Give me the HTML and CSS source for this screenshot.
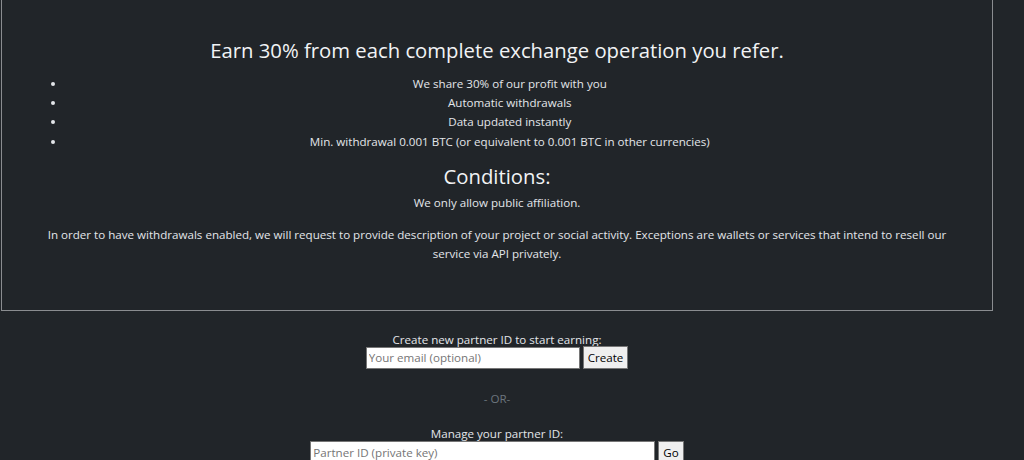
FILE: index.html
```html
<!DOCTYPE html>
<html lang="en">
<head>
<meta charset="utf-8">
<title>Affiliate</title>
<link rel="stylesheet" href="styles.css">
</head>
<body>
<main class="page">
  <section class="info-box">
    <h3 class="title">Earn 30% from each complete exchange operation you refer.</h3>
    <ul class="perks">
      <li>We share 30% of our profit with you</li>
      <li>Automatic withdrawals</li>
      <li>Data updated instantly</li>
      <li>Min. withdrawal 0.001 BTC (or equivalent to 0.001 BTC in other currencies)</li>
    </ul>
    <h3 class="subtitle">Conditions:</h3>
    <p class="text">We only allow public affiliation.</p>
    <p class="text">In order to have withdrawals enabled, we will request to provide description of your project or social activity. Exceptions are wallets or services that intend to resell our service via API privately.</p>
  </section>

  <form class="partner-form create-form">
    <label class="form-label" for="email">Create new partner ID to start earning:</label>
    <div class="form-row">
      <input id="email" class="field field-short" type="text" placeholder="Your email (optional)">
      <button class="btn" type="button">Create</button>
    </div>
  </form>

  <div class="or">- OR-</div>

  <form class="partner-form manage-form">
    <label class="form-label" for="pid">Manage your partner ID:</label>
    <div class="form-row">
      <input id="pid" class="field field-long" type="text" placeholder="Partner ID (private key)">
      <button class="btn" type="button">Go</button>
    </div>
  </form>
</main>
</body>
</html>
```

FILE: styles.css
```css
* { box-sizing: border-box; }

html, body {
  margin: 0;
  padding: 0;
  background: #212529;
}

body {
  color: #e3e6e9;
  font-family: "Open Sans", "Noto Sans", sans-serif;
  font-size: 11.6px;
  line-height: 19.2px;
}

.page {
  width: 994px;
  overflow: hidden;
}

.info-box {
  margin: -20px 1px 0 1px;
  border: 1px solid #8a8d90;
  padding: 56px 38.4px 34px;
  text-align: center;
}

.title,
.subtitle {
  margin: 0;
  font-size: 20.3px;
  line-height: 27px;
  font-weight: 400;
  color: #f1f3f5;
}

.title {
  margin-bottom: 10px;
}

.perks {
  margin: 0 0 12px;
  padding-left: 25.6px;
}

.perks li {
  line-height: 19.2px;
}

.subtitle {
  margin-bottom: 3px;
}

.text {
  margin: 0 0 12.8px;
}

.partner-form {
  display: flex;
  flex-direction: column;
  align-items: center;
}

.create-form {
  margin-top: 19px;
}

.form-label {
  display: block;
}

.form-row {
  display: flex;
  align-items: center;
  gap: 3px;
  margin-top: -3px;
}

.field {
  height: 22px;
  border: 1px solid #767676;
  background: #fff;
  color: #000;
  font-family: inherit;
  font-size: 11.6px;
  padding: 0 2px;
  border-radius: 0;
}

.field::placeholder {
  color: #757575;
}

.field-short { width: 214px; }
.field-long { width: 345px; }

.btn {
  height: 23px;
  border: 1px solid #767676;
  background: #efefef;
  color: #000;
  font-family: inherit;
  font-size: 11.6px;
  padding: 0 4px;
  border-radius: 0;
}

.or {
  margin-top: 20px;
  text-align: center;
  color: #6c757d;
}

.manage-form {
  margin-top: 16px;
}
```
